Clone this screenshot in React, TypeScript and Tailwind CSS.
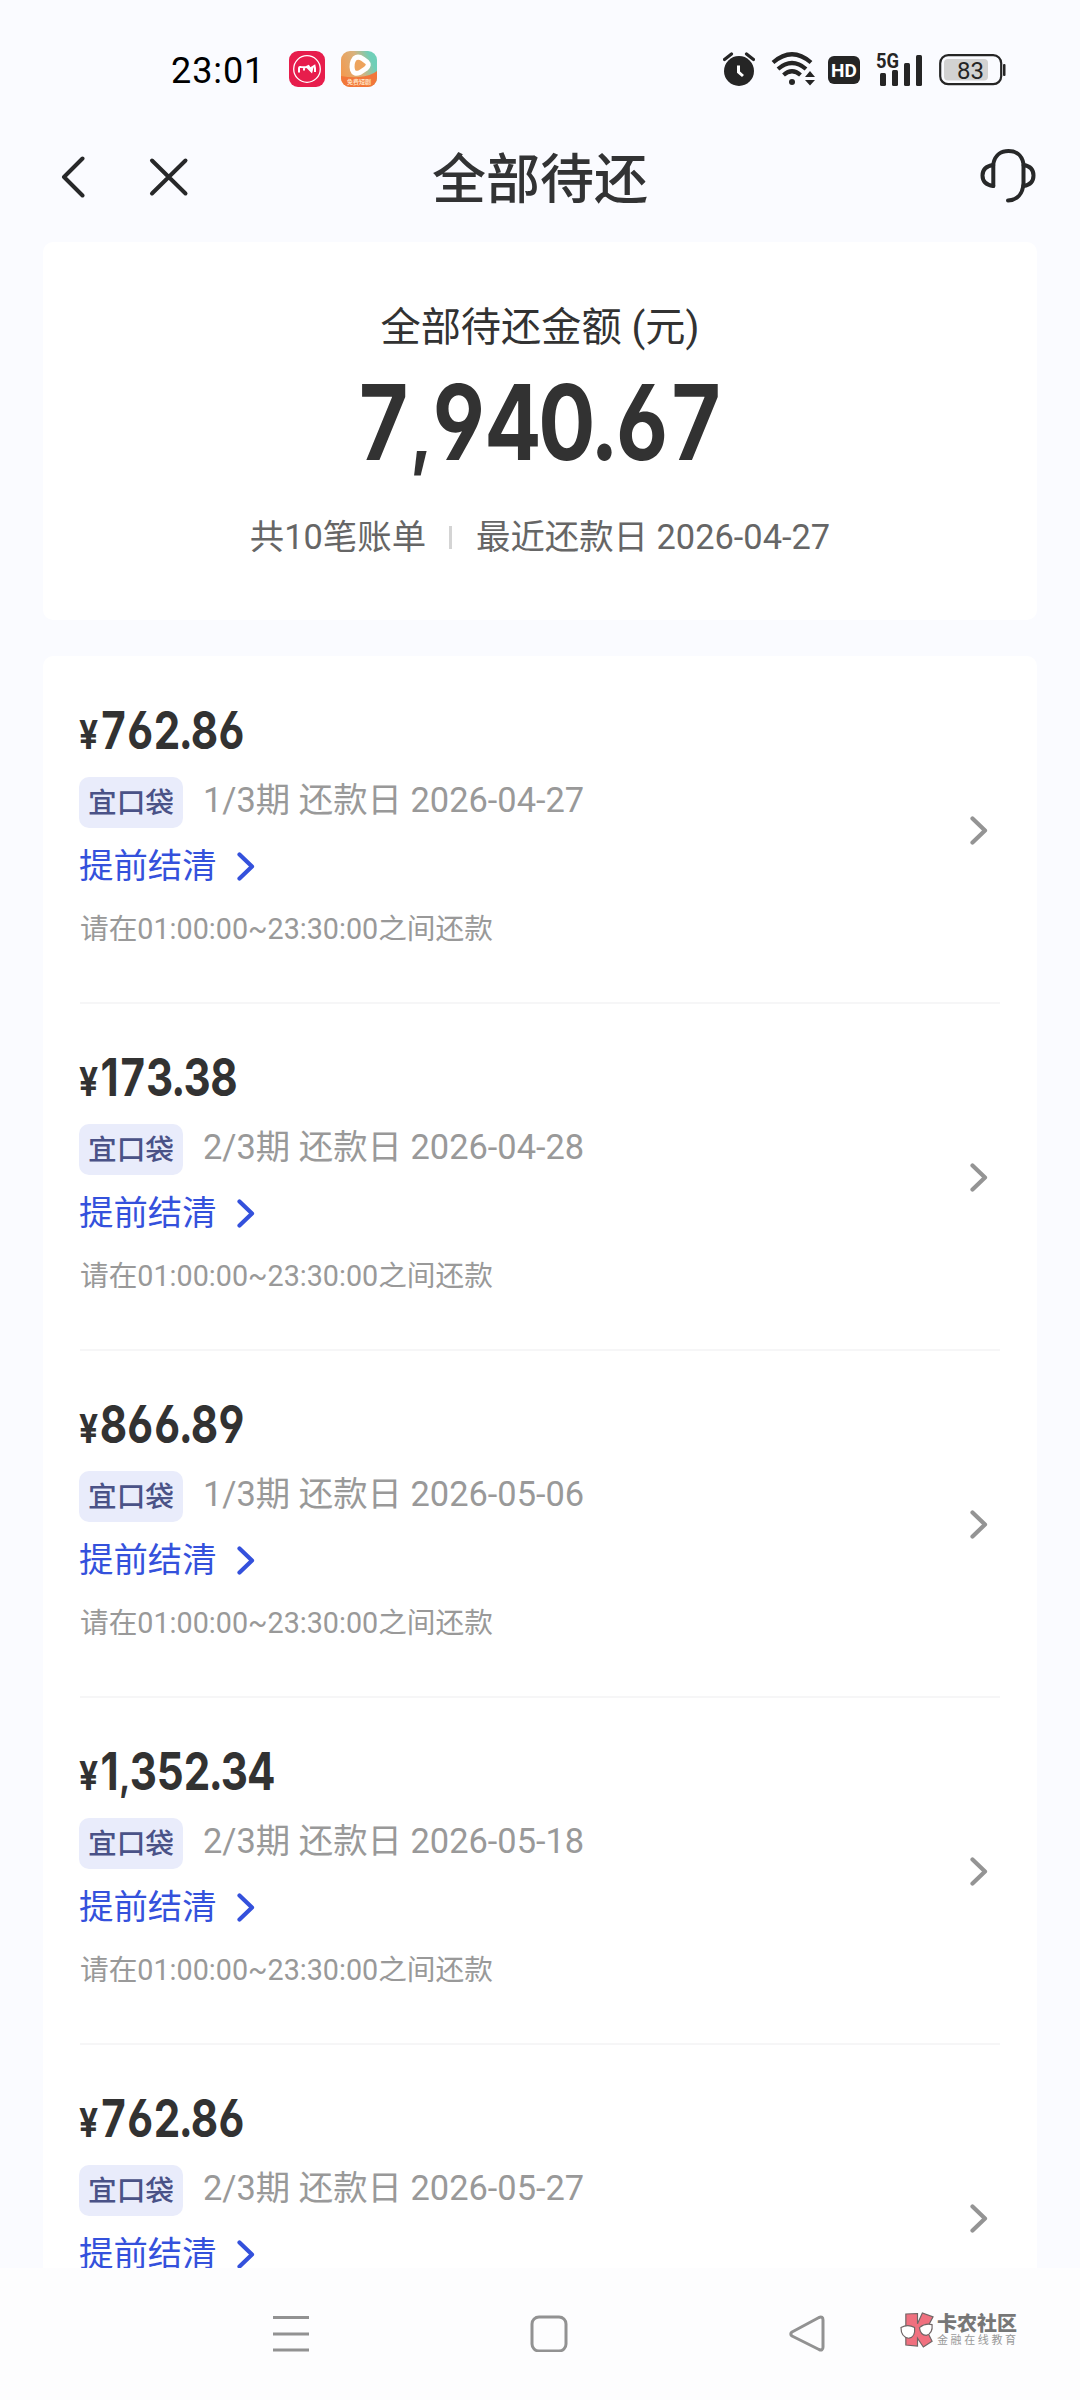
import { clsx } from "clsx";

const bills = [
  { amount: "762.86", term: "1/3期", date: "2026-04-27" },
  { amount: "173.38", term: "2/3期", date: "2026-04-28" },
  { amount: "866.89", term: "1/3期", date: "2026-05-06" },
  { amount: "1,352.34", term: "2/3期", date: "2026-05-18" },
  { amount: "762.86", term: "2/3期", date: "2026-05-27" },
];

function Chevron({ className }: { className?: string }) {
  return (
    <svg viewBox="0 0 18 29" fill="none" stroke="currentColor" strokeWidth="4.2" strokeLinecap="round" strokeLinejoin="round" className={clsx("h-[29px] w-[18px] shrink-0", className)}>
      <path d="M2.5 2.5 L15 14.5 L2.5 26.5" />
    </svg>
  );
}

// cell width of one character, "1" and punctuation are narrower
function cellClass(char: string) {
  if (char === ",") return "w-[0.32em] text-[0.78em]";
  if (char === ".") return "w-[0.25em]";
  if (char === "1") return "w-[0.46em]";
  return "w-[0.6375em]";
}

function AmountText({ text, className }: { text: string; className?: string }) {
  return (
    <span className={clsx("inline-flex items-baseline whitespace-nowrap font-['Inter',sans-serif] font-bold text-[#323232] [font-feature-settings:'cv03','cv04']", className)}>
      {text.split("").map((char, i) => (
        <span key={i} className={clsx("flex justify-center", cellClass(char))}>
          {char}
        </span>
      ))}
    </span>
  );
}

function StatusBar() {
  return (
    <div className="flex h-[138px] items-center pl-[171px] pr-[73px] text-[#222]">
      <span className="mt-[3px] w-[118px] font-['Roboto',sans-serif] text-[36px] leading-none tracking-[0.9px] text-black">23:01</span>
      <svg viewBox="0 0 36 36" className="size-9">
        <rect width="36" height="36" rx="9" fill="#e71d4c" />
        <circle cx="18" cy="18" r="13.3" fill="none" stroke="#fff" strokeWidth="1.3" />
        <path d="M10 21.5 V17.5 Q10 15.5 12 16 L17 16.2 L19.5 15 L21 17.5 L25.5 14.8 L26 17 V21 M15 16.5 V19.5 M18.5 16.5 L22.5 20.5 L23.5 16.5" fill="none" stroke="#fff" strokeWidth="2" />
      </svg>
      <svg viewBox="0 0 36 36" className="ml-4 size-9">
        <defs>
          <linearGradient id="app" x1="0" y1="0.6" x2="1" y2="0.2">
            <stop offset="0" stopColor="#f39a4f" />
            <stop offset="0.5" stopColor="#d9b27d" />
            <stop offset="0.85" stopColor="#6fcfb8" />
          </linearGradient>
          <clipPath id="appClip"><rect width="36" height="36" rx="9" /></clipPath>
        </defs>
        <g clipPath="url(#appClip)">
          <rect width="36" height="36" fill="url(#app)" />
          <path d="M0 25 Q10 27 18 26 Q30 25 36 20 V36 H0 Z" fill="#f2773a" />
        </g>
        <path d="M13.5 7.5 Q17 4.5 22 8 L26 11 Q29 14 25 17.5 L19 21.5 Q13 24 11.5 19 Q10 12 13.5 7.5 Z" fill="#eda45d" stroke="#fff" strokeWidth="5" strokeLinejoin="round" />
        <text x="18" y="33" fontSize="6" fontWeight="700" textAnchor="middle" fill="#ffe0c0" fontFamily="Noto Sans CJK SC, sans-serif">免费短剧</text>
      </svg>

      <div className="ml-auto flex items-center">
        <svg viewBox="0 0 32 34" className="-ml-px mr-px h-[34px] w-8">
          <circle cx="16" cy="19" r="15" fill="#252525" />
          <path d="M1.5 7.5 L8.5 2 M23.5 2 L30.5 7.5" stroke="#252525" strokeWidth="3.2" strokeLinecap="round" />
          <path d="M15.5 13.5 V20 L20 24" stroke="#fff" strokeWidth="3" fill="none" />
        </svg>
        <svg viewBox="0 0 46 34" className="ml-[15px] h-[34px] w-[46px]" fill="none" stroke="#252525" strokeWidth="4.2">
          <path d="M2 10.5 Q21 -6 40 10.5" />
          <path d="M7 17 Q21 5 35 17" />
          <path d="M12.5 23 Q21 15.5 29.5 23" />
          <circle cx="21" cy="30" r="3" fill="#252525" stroke="none" />
          <path d="M34 25 L39 19 L44 25 Z M34 28 L39 33.5 L44 28 Z" fill="#252525" stroke="none" />
        </svg>
        <span className="ml-[11px] mt-[2px] flex h-7 w-8 items-center justify-center rounded-[6px] bg-[#252525] font-['Roboto',sans-serif] text-[19px] font-bold leading-none text-white">HD</span>
        <svg viewBox="0 0 48 34" className="ml-4 h-[34px] w-[48px] overflow-visible" fill="#252525">
          <text x="0" y="15.5" fontSize="20" fontWeight="700" textLength="23" lengthAdjust="spacingAndGlyphs" fontFamily="Roboto, sans-serif">5G</text>
          <rect x="4" y="21" width="6" height="13" rx="1.5" />
          <rect x="16" y="18" width="6" height="16" rx="1.5" />
          <rect x="28" y="11" width="6" height="23" rx="1.5" />
          <rect x="40" y="3" width="6" height="31" rx="1.5" />
        </svg>
        <svg viewBox="0 0 68 32" className="ml-[15px] mt-px h-8 w-[68px]">
          <rect x="1.2" y="1.2" width="61" height="29" rx="8" fill="none" stroke="#252525" strokeWidth="2.2" />
          <rect x="5" y="5" width="44" height="21.5" rx="4" fill="#d2d2d2" />
          <rect x="64" y="10" width="2.5" height="12" rx="1" fill="#252525" />
          <text x="31.5" y="24.5" fontSize="24" textAnchor="middle" fill="#252525" fontFamily="Roboto, sans-serif">83</text>
        </svg>
      </div>
    </div>
  );
}

function Header() {
  return (
    <header className="flex h-[104px] items-start justify-between px-[43px]">
      <div className="flex w-[300px] pl-[17px] pt-[18px] text-[#272829]">
        <svg viewBox="0 0 28 44" className="h-11 w-7" fill="none" stroke="currentColor" strokeWidth="4" strokeLinecap="round" strokeLinejoin="round">
          <path d="M22.5 2.5 L4 21 L22.5 39.5" />
        </svg>
        <svg viewBox="0 0 44 44" className="ml-[59px] size-11" fill="none" stroke="currentColor" strokeWidth="4" strokeLinecap="round">
          <path d="M5 4.5 L38.5 37.5 M38.5 4.5 L5 37.5" />
        </svg>
      </div>
      <h1 className="mt-[3px] h-[80px] text-[54px] font-medium leading-[80px] text-[#323334]">全部待还</h1>
      <div className="flex w-[300px] justify-end pr-px pt-[10px]">
        <svg viewBox="0 0 56 56" className="size-14" fill="none" stroke="#272829" strokeWidth="4" strokeLinecap="round" strokeLinejoin="round">
          <path d="M13.3 38 V16 C15 6 22 3 28.5 3 S42 6 43.5 16 V35 C43 46 37 52 28 52.5" />
          <path d="M13.3 17 C6 18 2.5 22 2.5 27.5 C2.5 33 6 37 13.3 38" />
          <path d="M43.5 17 C50 18 53.5 22 53.5 27.5 C53.5 33 50 37 43.5 38" />
        </svg>
      </div>
    </header>
  );
}

function Summary() {
  return (
    <section className="flex h-[378px] flex-col items-center rounded-[10px] bg-white pt-[58px] text-[#323232]">
      <h2 className="text-[40.2px] leading-[56px]">全部待还金额 (元)</h2>
      <div className="mt-4 flex h-[100px] justify-center">
        <AmountText text="7,940.67" className="scale-x-[0.815] text-[104px] leading-[100px]" />
      </div>
      <div className="mt-[40px] flex items-center text-[34.4px] leading-[50px] text-[#666]">
        <span>共10笔账单</span>
        <span className="ml-[23px] mr-6 h-[23px] w-[3px] bg-[#d4d4d4]"></span>
        <span>最近还款日 2026-04-27</span>
      </div>
    </section>
  );
}

function BillRow({ amount, term, date }: { amount: string; term: string; date: string }) {
  return (
    <li className="flex h-[347px] shrink-0 items-center border-b-2 border-[#f6f6f7]">
      <div className="flex h-full flex-1 flex-col items-start pt-[47px]">
        <div className="flex h-[54px] items-baseline">
          <span className="-ml-px w-[21px] origin-left scale-x-[0.84] font-['Inter',sans-serif] text-[40px] font-bold leading-[54px] text-[#323232]">¥</span>
          <AmountText text={amount} className="origin-left scale-x-[0.81] text-[52px] leading-[54px]" />
        </div>
        <div className="-ml-px mt-[19px] flex h-[51px] items-center">
          <span className="flex h-[51px] w-[104px] items-center justify-center rounded-[10px] bg-[#e9ecfb] pt-[2px] text-[28.7px] font-medium text-[#4a5287]">宜口袋</span>
          <span className="-mt-[5px] ml-5 text-[34.4px] leading-[50px] text-[#999]">{term} 还款日 {date}</span>
        </div>
        <div className="-ml-px mt-[12px] flex h-[51px] items-center text-[#3451dc]">
          <span className="text-[34.4px] leading-[50px]">提前结清</span>
          <Chevron className="ml-5 mt-px" />
        </div>
        <p className="mt-[18px] h-10 text-[28.7px] leading-10 text-[#999]">请在01:00:00~23:30:00之间还款</p>
      </div>
      <Chevron className="mr-3 mt-[2px] text-[#949494]" />
    </li>
  );
}

function NavBar() {
  return (
    <footer className="flex h-[132px] bg-[#fdfdfe] pl-[272px] pt-[46px]">
      <svg viewBox="0 0 38 38" className="size-[38px]" stroke="#929292" strokeWidth="3">
        <path d="M1 3.5 H37 M1 20 H37 M1 36 H37" />
      </svg>
      <svg viewBox="0 0 38 38" className="ml-[220px] size-[38px]" fill="none" stroke="#929292" strokeWidth="3">
        <rect x="2" y="3" width="34" height="34" rx="7" />
      </svg>
      <svg viewBox="0 0 38 38" className="ml-[220px] size-[38px]" fill="none" stroke="#929292" strokeWidth="3" strokeLinejoin="round">
        <path d="M4 18 L31 3.5 Q35 2 35 6 V33 Q35 37 31 35.5 L4 22 Q1.5 20 4 18 Z" />
      </svg>
      <div className="ml-[74px] flex items-start">
        <svg viewBox="0 0 36 38" className="-mt-[2px] h-[37px] w-[35px]" stroke="#706566" strokeWidth="1.2">
          <path d="M6 2 L18 1.5 V12 L23 1 L34 5 L27 18 L33 30 L24 36 L18 27 V35 L6 34 Z" fill="#f0707f" />
          <path d="M1 16 Q8 12 15 16 Q16 26 9 27 Q1 26 1 16 Z M20 16 Q26 11 33 13 Q34 22 27 24 Q21 24 20 16 Z" fill="#fff" />
        </svg>
        <div className="-mt-px ml-[2px] text-[#777]">
          <p className="text-[20px] font-black leading-[22px]">卡农社区</p>
          <p className="-mt-px whitespace-nowrap text-[11px] leading-[14px] tracking-[2.6px] text-[#999]">金融在线教育</p>
        </div>
      </div>
    </footer>
  );
}

export default function App() {
  return (
    <div className="flex h-[2400px] w-[1080px] flex-col overflow-hidden bg-[#fafbff] font-['Roboto','Noto_Sans_CJK_SC',sans-serif]">
      <div className="h-[2268px] shrink-0 overflow-hidden">
        <StatusBar />
        <Header />
        <main className="px-[43px]">
          <Summary />
          <ul className="mt-9 flex flex-col rounded-[10px] bg-white px-[37px] pt-px">
            {bills.map((bill) => (
              <BillRow key={bill.date} {...bill} />
            ))}
          </ul>
        </main>
      </div>
      <NavBar />
    </div>
  );
}
